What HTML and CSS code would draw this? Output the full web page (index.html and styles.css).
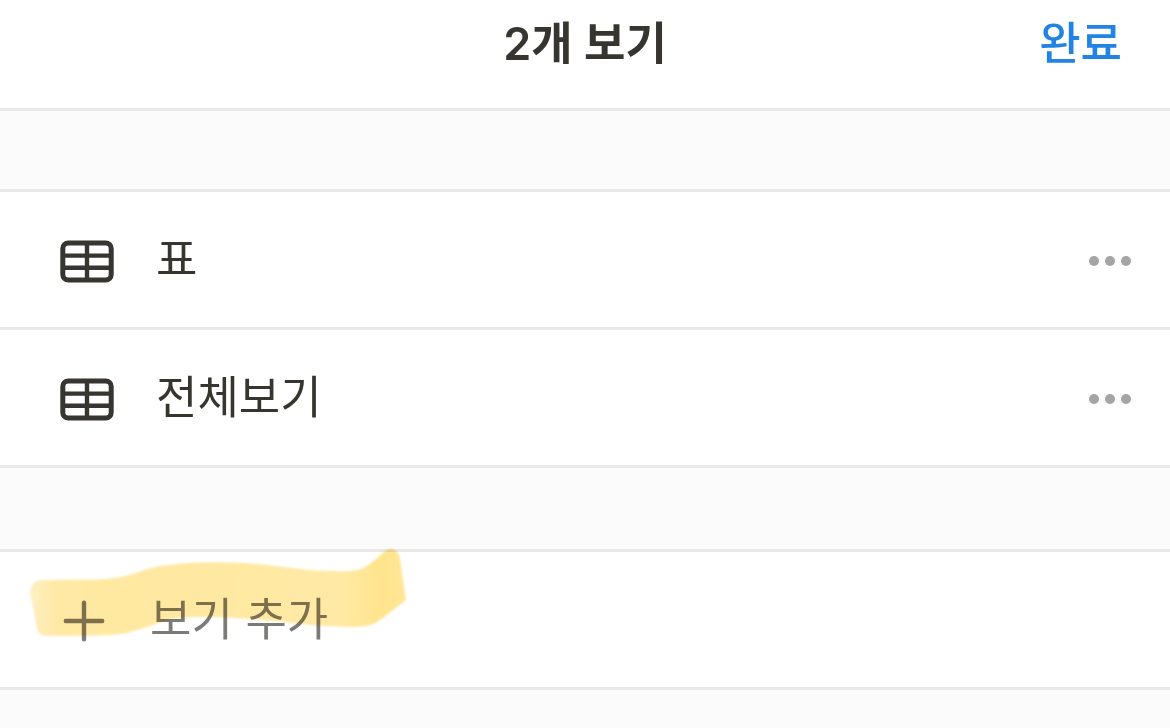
FILE: index.html
```html
<!DOCTYPE html>
<html lang="ko">
<head>
<meta charset="utf-8">
<meta name="viewport" content="width=device-width, initial-scale=1">
<title>2개 보기</title>
<link rel="stylesheet" href="styles.css">
</head>
<body>
<header class="header">
  <h1 class="title">2개 보기</h1>
  <button class="done" type="button">완료</button>
</header>
<main class="content">
  <ul class="group">
    <li class="row">
      <button class="view" type="button">
        <svg class="table-icon" viewBox="0 0 54 44" aria-hidden="true"><rect x="2.8" y="3" width="48.4" height="37" rx="5.5"/><path d="M27 3v37M3 15.6h48M3 27.8h48" stroke-width="4.4"/></svg>
        <span class="label">표</span>
      </button>
      <button class="more" type="button" aria-label="표 더 보기">
        <svg class="dots" viewBox="0 0 44 12" aria-hidden="true"><circle cx="6" cy="6" r="5"/><circle cx="22" cy="6" r="5"/><circle cx="38" cy="6" r="5"/></svg>
      </button>
    </li>
    <li class="row">
      <button class="view" type="button">
        <svg class="table-icon" viewBox="0 0 54 44" aria-hidden="true"><rect x="2.8" y="3" width="48.4" height="37" rx="5.5"/><path d="M27 3v37M3 15.6h48M3 27.8h48" stroke-width="4.4"/></svg>
        <span class="label">전체보기</span>
      </button>
      <button class="more" type="button" aria-label="전체보기 더 보기">
        <svg class="dots" viewBox="0 0 44 12" aria-hidden="true"><circle cx="6" cy="6" r="5"/><circle cx="22" cy="6" r="5"/><circle cx="38" cy="6" r="5"/></svg>
      </button>
    </li>
  </ul>
  <div class="group add-group">
    <button class="add" type="button">
      <svg class="plus-icon" viewBox="0 0 42 44" aria-hidden="true"><path d="M21 2.8v36.4M2.8 21h36.4"/></svg>
      <span class="label">보기 추가</span>
    </button>
    <svg class="marker" viewBox="20 540 400 110" aria-hidden="true">
      <defs>
        <linearGradient id="ink" gradientUnits="userSpaceOnUse" x1="30" y1="0" x2="406" y2="0">
          <stop offset="0" stop-color="#ffefc2"/>
          <stop offset=".07" stop-color="#ffe9a6"/>
          <stop offset=".2" stop-color="#ffe8a0"/>
          <stop offset=".82" stop-color="#ffe9a5"/>
          <stop offset=".94" stop-color="#ffe48d"/>
          <stop offset="1" stop-color="#ffe699"/>
        </linearGradient>
        <filter id="soft" x="-5%" y="-10%" width="110%" height="120%"><feGaussianBlur stdDeviation="1.2"/></filter>
      </defs>
      <path fill="url(#ink)" filter="url(#soft)" d="M30 592Q31 580 43 580L97 579.500C125 579 139 571 157 566.500C190 561 237 561 267 565C299 569 326 572 350 571C363 571 369 564 376 559C381 555 386 549 391 549Q398 549 400 559L406 600C399 606 391 611 384 617C376 624 367 627 354 627C320 627 296 623 273 621C245 618 195 615 172 619C158 622 145 629 126 633C104 637 74 635 48 636Q39 637 37 629Z"/>
    </svg>
  </div>
</main>
</body>
</html>
```
FILE: styles.css
```css
* {
  box-sizing: border-box;
}

body {
  margin: 0;
  min-height: 100vh;
  background: #fbfbfb;
  color: #37352f;
  font-family: Inter, "Noto Sans CJK KR", sans-serif;
  font-size: 45px;
  line-height: 60px;
}

button {
  padding: 0;
  border: 0;
  background: none;
  color: inherit;
  font: inherit;
  text-align: left;
  cursor: pointer;
}

svg {
  display: block;
  flex: none;
}

.header {
  display: grid;
  grid-template-columns: 1fr auto 1fr;
  align-items: start;
  height: 111px;
  padding: 14px 48px 0;
  border-bottom: 3px solid #e9e9e8;
  background: #fff;
}

.title {
  grid-column: 2;
  margin: 0;
  font-size: 45px;
  font-weight: 600;
}

.done {
  justify-self: end;
  color: #2383e2;
  font-weight: 500;
}

.content {
  padding-top: 78px;
}

.group {
  margin: 0;
  padding: 0;
  border-top: 3px solid #e9e9e8;
  background: #fff;
  list-style: none;
}

.row {
  display: flex;
  align-items: stretch;
  height: 138px;
  border-bottom: 3px solid #e9e9e8;
}

.view {
  display: flex;
  flex: 1;
  align-items: center;
  gap: 42px;
  padding: 0 0 0 60px;
}

.table-icon {
  width: 54px;
  height: 44px;
  margin-top: 4px;
  fill: none;
  stroke: #37352f;
  stroke-width: 5;
}

.more {
  padding: 3px 38px 0 24px;
}

.dots {
  width: 44px;
  height: 12px;
  fill: #a4a4a2;
}

.add-group {
  position: relative;
  margin-top: 81px;
}

.add {
  display: flex;
  align-items: center;
  gap: 45px;
  width: 100%;
  height: 138px;
  padding-left: 63px;
  border-bottom: 3px solid #e9e9e8;
  color: #7d7b77;
}

.plus-icon {
  width: 42px;
  height: 44px;
  margin-top: 4px;
  fill: none;
  stroke: #7d7b77;
  stroke-width: 4.4;
  stroke-linecap: round;
}

.marker {
  position: absolute;
  top: -12px;
  left: 20px;
  width: 400px;
  height: 110px;
  mix-blend-mode: multiply;
  pointer-events: none;
}
```
